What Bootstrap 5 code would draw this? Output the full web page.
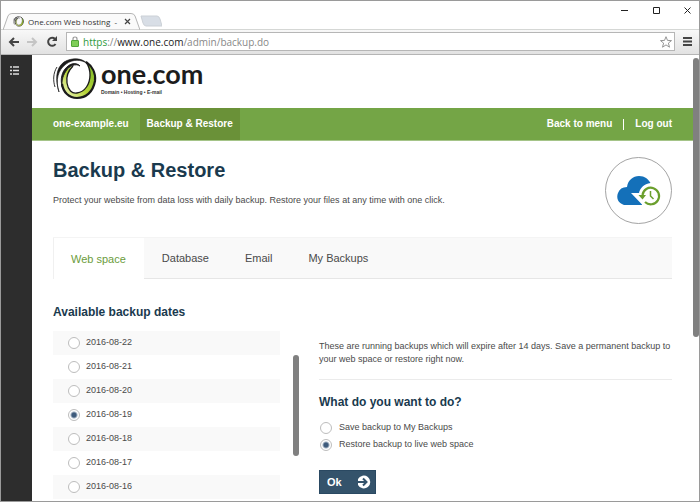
<!DOCTYPE html>
<html lang="en">
<head>
<meta charset="utf-8">
<meta name="viewport" content="width=device-width, initial-scale=1">
<title>One.com Web hosting - Backup &amp; Restore</title>
<link href="https://cdn.jsdelivr.net/npm/bootstrap@5.3.0/dist/css/bootstrap.min.css" rel="stylesheet">
<style>
  body { font-family: "Liberation Sans", Arial, sans-serif; font-size: 9px; line-height: 13px; color: #4a4a4a; background: #fff; }
  button { font-family: inherit; }
  svg { display: block; flex: none; }
  a { text-decoration: none; }
  .window { min-height: 100vh; border: 1px solid #9a9a9a; }
  .chrome-text { font-family: "Open Sans", "Noto Sans", sans-serif; color: #333; }
  .tabstrip { height: 29px; padding: 0 8px 0 2px; border-bottom: 1px solid #d5d7d5; }
  .browser-tab { width: 137px; height: 17px; padding: 0 9px 0 10px; margin-bottom: -1px; font-size: 8px; line-height: 16px; }
  .tab-shape { position: absolute; left: 0; top: 0; width: 100%; height: 100%; }
  .plain-btn { border: 0; padding: 0; background: none; color: inherit; }
  .win-controls { gap: 24px; padding-top: 5px; }
  .toolbar { height: 25px; padding: 2px 7px 3px 7px; background: linear-gradient(#f8f8f8, #e2e2e2); border-bottom: 1px solid #b5b5b5; }
  .address { height: 19px; margin-left: 8px; margin-right: 8px; padding: 0 2px 0 4px; border: 1px solid #b6b6b6; background: #fff; font-size: 10px; line-height: 16px; color: #888; }
  .scheme { color: #2f9a3c; }
  .host { color: #222; }
  .side { flex: none; width: 31px; padding-top: 11px; background: #2d2d2d; }
  .brand-row { height: 53px; padding: 3px 21px 0 21px; }
  .wordmark { font-family: Lato, sans-serif; font-weight: 700; font-size: 27px; line-height: 32px; color: #1c1c1c; }
  .tagline { font-weight: 700; font-size: 5px; line-height: 5px; color: #333; }
  .site-nav { height: 33px; padding: 0 21px 0 14px; background: #74a546; border-bottom: 1px solid #a5c488; font-size: 10px; font-weight: 700; }
  .site-nav a { color: #fff; padding: 0 7px; line-height: 32px; }
  .site-nav .current { background: #6a9138; margin-left: 4px; }
  .rule-v { width: 1px; height: 11px; background: #fff; margin: 0 4px; }
  .page { padding: 16px 21px 0 21px; }
  h1, h2 { color: #1a3a4e; font-weight: 700; margin: 0; }
  h1 { font-size: 20px; line-height: 26px; }
  h2 { font-size: 12px; line-height: 18px; }
  .intro { margin: 11px 0 0 0; }
  .section-tabs { margin-top: 11px; height: 42px; background: #f9f9f9; border-top: 1px solid #f4f4f4; border-bottom: 1px solid #e6e6e6; font-size: 11px; }
  .section-tabs button { padding: 0 18px; line-height: 40px; height: 40px; color: #4a4a4a; }
  .section-tabs .active { height: 41px; background: #fff; color: #6b9c3c; border-left: 1px solid #f0f0f0; padding-left: 17px; }
  .columns { padding-top: 10px; }
  .dates { flex: 0 0 227px; }
  .date-row { height: 24px; padding: 0 15px; gap: 6px; }
  .date-row:nth-child(odd) { background: #f9f9f9; }
  .date-row span, .choice span { margin-bottom: 1px; }
  input[type=radio] { appearance: none; flex: none; width: 12px; height: 12px; margin: 0; border: 1px solid #bdbdbd; border-radius: 50%; background: #fff; }
  input[type=radio]:checked { background: radial-gradient(circle, #3e5b7c 0 2px, #fff 4px); }
  .choice { height: 17px; gap: 7px; padding-left: 1px; }
  .thumb { flex: none; width: 6px; border-radius: 3px; background: #808080; }
  .list-thumb { height: 101px; margin: 24px 20px 0 13px; }
  .page-thumb { height: 279px; margin-top: 3px; }
  .details { padding-top: 9px; }
  .divider { height: 1px; background: #ebebeb; margin: 13px 0; }
  .ok-btn { width: 57px; height: 24px; margin-top: 17px; padding: 0 4px 0 7px; border: 1px solid #2a4962; background: #34536b; color: #fff; font-weight: 700; font-size: 11px; }
</style>
<script src="https://cdn.jsdelivr.net/npm/bootstrap@5.3.0/dist/js/bootstrap.bundle.min.js"></script>
</head>
<body>
<svg width="0" height="0" class="position-absolute" aria-hidden="true">
  <defs>
    <linearGradient id="lime" x1="0" y1="1" x2="1" y2="0">
      <stop offset="0" stop-color="#f6fad0"/><stop offset=".45" stop-color="#b5d334"/><stop offset="1" stop-color="#78b82a"/>
    </linearGradient>
    <symbol id="swirl" viewBox="0 0 44 42">
      <path d="M33 4C39 8 43 15 42 23C40 34 33 40 24 40C15 40 9 33 9 25C9 17 13 11 20 8C14 14 13 20 14 25C15 32 19 36 24 35C32 34 37 26 37 17C37 12 36 8 33 4Z" fill="url(#lime)"/>
      <path d="M33 4C39 8 43 15 42 23C40 34 33 40 24 40C16 40 10 34 9 26" fill="none" stroke="#1b1b1b" stroke-width="2.200"/>
      <path d="M33 4C36 8 37 12 37 17C37 26 32 34 24 35C19 36 15 32 14 25C13 19 15 13 20 8" fill="none" stroke="#1b1b1b" stroke-width="1.300"/>
      <path d="M35 6C28 1 20 1 13 6C5 12 2 22 6 34C2 21 3 10 11 4C20 -1 29 0 35 6Z" fill="#1b1b1b" stroke="#1b1b1b" stroke-width=".7"/>
      <path d="M27 8C23 5 16 8 13 13C9 19 8 25 10 31C7 24 8 16 12 11C17 5 23 4 27 8Z" fill="#1b1b1b" stroke="#1b1b1b" stroke-width=".9"/>
      <path d="M4 9C0 15 0 23 2 29" fill="none" stroke="#1b1b1b" stroke-width=".9"/>
    </symbol>
  </defs>
</svg>

<div class="window d-flex flex-column">
  <header class="tabstrip d-flex justify-content-between chrome-text">
    <div class="d-flex align-items-end">
      <div class="browser-tab position-relative d-flex align-items-center">
        <svg class="tab-shape" viewBox="0 0 138 17" preserveAspectRatio="none" aria-hidden="true">
          <path d="M0 17L5 3Q6 .5 9 .5H129Q132 .5 133 3L138 17Z" fill="#fafafa" stroke="#b4b4b4"/>
        </svg>
        <svg class="position-relative" width="11" height="11" aria-hidden="true"><use href="#swirl"/></svg>
        <span class="position-relative text-nowrap flex-grow-1 ms-1">One.com Web hosting&nbsp; -</span>
        <button class="plain-btn position-relative" aria-label="Close tab"><svg width="7" height="7" viewBox="0 0 7 7"><path d="M1 1L6 6M6 1L1 6" stroke="#444" stroke-width="1.2"/></svg></button>
      </div>
      <button class="plain-btn" aria-label="New tab"><svg width="22" height="14" viewBox="0 0 22 14"><path d="M1 1H17Q19 1 20 4L22 11H6Q4 11 3 8Z" fill="#d8dee6" stroke="#cbd0d6"/></svg></button>
    </div>
    <div class="win-controls d-flex align-items-start">
      <button class="plain-btn" aria-label="Minimize"><svg width="8" height="9" viewBox="0 0 8 9"><path d="M0 4.500H7" stroke="#222"/></svg></button>
      <button class="plain-btn" aria-label="Maximize"><svg width="7" height="9" viewBox="0 0 7 9"><path d="M.5 1.5H6.5V7.5H.5Z" fill="none" stroke="#222"/></svg></button>
      <button class="plain-btn" aria-label="Close"><svg width="7" height="9" viewBox="0 0 7 9"><path d="M.5 1.5L6.5 7.5M6.5 1.5L.5 7.5" stroke="#222"/></svg></button>
    </div>
  </header>

  <div class="toolbar d-flex align-items-center">
    <button class="plain-btn" aria-label="Back"><svg width="11" height="10" viewBox="0 0 11 10"><path d="M11 5H2M6 1L2 5L6 9" fill="none" stroke="#444" stroke-width="2"/></svg></button>
    <button class="plain-btn mx-2" aria-label="Forward"><svg width="11" height="10" viewBox="0 0 11 10"><path d="M0 5H9M5 1L9 5L5 9" fill="none" stroke="#c4c4c4" stroke-width="2"/></svg></button>
    <button class="plain-btn" aria-label="Reload"><svg width="12" height="12" viewBox="0 0 12 12"><path d="M9 3A4 4 0 1 0 9.500 8" fill="none" stroke="#444" stroke-width="2"/><path d="M11 0V5H6Z" fill="#444"/></svg></button>
    <div class="address chrome-text flex-grow-1 d-flex align-items-center">
      <svg width="8" height="11" viewBox="0 0 8 11" aria-hidden="true"><path d="M2 5V3Q2 1 4 1T6 3V5" fill="none" stroke="#999" stroke-width="1.2"/><rect x=".5" y="4.500" width="7" height="6" rx=".5" fill="#7fce58" stroke="#52a63a"/></svg>
      <span class="ms-1 flex-grow-1"><span class="scheme">https</span>://<span class="host">www.one.com</span>/admin/backup.do</span>
      <button class="plain-btn" aria-label="Bookmark"><svg width="12" height="12" viewBox="0 0 12 12"><path d="M6 .7L7.500 4.400L11.500 4.600L8.400 7.100L9.500 11.200L6 8.900L2.500 11.200L3.600 7.100L.5 4.600L4.500 4.400Z" fill="#fff" stroke="#8a8a8a" stroke-width=".9"/></svg></button>
    </div>
    <button class="plain-btn" aria-label="Menu"><svg width="9" height="9" viewBox="0 0 9 9"><path d="M0 1H9M0 4.500H9M0 8H9" stroke="#444" stroke-width="2"/></svg></button>
  </div>

  <div class="d-flex flex-grow-1">
    <aside class="side d-flex flex-column align-items-center">
      <button class="plain-btn me-1" aria-label="Open sidebar"><svg width="9" height="9" viewBox="0 0 9 9"><path d="M0 1H2M3 1H9M0 4.500H2M3 4.500H9M0 8H2M3 8H9" stroke="#ddd" stroke-width="1.500"/></svg></button>
    </aside>

    <div class="flex-grow-1">
      <div class="brand-row">
        <a href="#" class="d-inline-flex" aria-label="one.com">
          <svg width="44" height="42" aria-hidden="true"><use href="#swirl"/></svg>
          <span class="d-flex flex-column ms-1"><span class="wordmark">one.com</span><span class="tagline">Domain • Hosting • E-mail</span></span>
        </a>
      </div>

      <nav class="site-nav d-flex justify-content-between">
        <div class="d-flex"><a href="#">one-example.eu</a><a href="#" class="current">Backup &amp; Restore</a></div>
        <div class="d-flex align-items-center"><a href="#">Back to menu</a><span class="rule-v"></span><a href="#" class="pe-0">Log out</a></div>
      </nav>

      <main class="page">
        <div class="d-flex justify-content-between">
          <div>
            <h1>Backup &amp; Restore</h1>
            <p class="intro">Protect your website from data loss with daily backup. Restore your files at any time with one click.</p>
          </div>
          <svg width="67" height="69" viewBox="0 0 67 69" aria-hidden="true">
            <circle cx="33.500" cy="33.500" r="33" fill="#fff" stroke="#999" stroke-width=".9"/>
            <path d="M19 48C13 46 11 41 13 36Q15 30 22 30C23 23 28 19 34 19C40 19 43 22 45.500 26C39 27 35 31 34 36H26L37 47.500V48Z" fill="#1470b9"/>
            <path d="M37.500 38A8.300 8.300 0 1 1 40 45" fill="none" stroke="#6b9f2d" stroke-width="2.200"/>
            <path d="M33.500 38H41L37.500 42.500Z" fill="#6b9f2d"/>
            <path d="M45.500 34V39L48.500 42" fill="none" stroke="#6b9f2d" stroke-width="1.500"/>
          </svg>
        </div>

        <div class="section-tabs d-flex" role="tablist">
          <button class="plain-btn active" role="tab" aria-selected="true">Web space</button>
          <button class="plain-btn" role="tab">Database</button>
          <button class="plain-btn" role="tab">Email</button>
          <button class="plain-btn" role="tab">My Backups</button>
        </div>

        <h2 class="mt-4">Available backup dates</h2>
        <div class="columns d-flex">
          <div class="dates">
            <label class="date-row d-flex align-items-center"><input type="radio" name="date"><span>2016-08-22</span></label>
            <label class="date-row d-flex align-items-center"><input type="radio" name="date"><span>2016-08-21</span></label>
            <label class="date-row d-flex align-items-center"><input type="radio" name="date"><span>2016-08-20</span></label>
            <label class="date-row d-flex align-items-center"><input type="radio" name="date" checked><span>2016-08-19</span></label>
            <label class="date-row d-flex align-items-center"><input type="radio" name="date"><span>2016-08-18</span></label>
            <label class="date-row d-flex align-items-center"><input type="radio" name="date"><span>2016-08-17</span></label>
            <label class="date-row d-flex align-items-center"><input type="radio" name="date"><span>2016-08-16</span></label>
          </div>
          <div class="thumb list-thumb"></div>
          <div class="details flex-grow-1">
            <p class="mb-0">These are running backups which will expire after 14 days. Save a permanent backup to your web space or restore right now.</p>
            <div class="divider"></div>
            <h2>What do you want to do?</h2>
            <div class="pt-2">
              <label class="choice d-flex align-items-center"><input type="radio" name="action"><span>Save backup to My Backups</span></label>
              <label class="choice d-flex align-items-center"><input type="radio" name="action" checked><span>Restore backup to live web space</span></label>
            </div>
            <button class="ok-btn d-flex align-items-center justify-content-between">Ok
              <svg width="14" height="14" viewBox="0 0 14 14" aria-hidden="true"><path d="M1 4A6.500 6.500 0 1 1 1 10Z" fill="#fff"/><path d="M0 7H9M6 3.500L9.500 7L6 10.500" fill="none" stroke="#34536b" stroke-width="2"/></svg>
            </button>
          </div>
        </div>
      </main>
    </div>
    <div class="thumb page-thumb"></div>
  </div>
</div>
</body>
</html>
